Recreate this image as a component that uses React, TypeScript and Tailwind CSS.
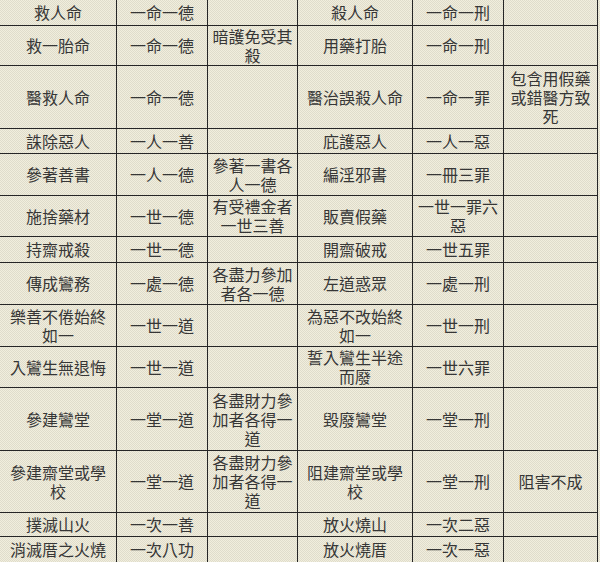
import React from "react";

type Row = { h: string; cells: string[] };

// rows of the merit / demerit table
const rows: Row[] = [
  { h: "h-[26px]", cells: ["救人命", "一命一德", "", "殺人命", "一命一刑", ""] },
  { h: "h-[40px]", cells: ["救一胎命", "一命一德", "暗護免受其殺", "用藥打胎", "一命一刑", ""] },
  { h: "h-[63px]", cells: ["醫救人命", "一命一德", "", "醫治誤殺人命", "一命一罪", "包含用假藥或錯醫方致死"] },
  { h: "h-[25px]", cells: ["誅除惡人", "一人一善", "", "庇護惡人", "一人一惡", ""] },
  { h: "h-[42px]", cells: ["參著善書", "一人一德", "參著一書各人一德", "編淫邪書", "一冊三罪", ""] },
  { h: "h-[41px]", cells: ["施捨藥材", "一世一德", "有受禮金者一世三善", "販賣假藥", "一世一罪六惡", ""] },
  { h: "h-[26px]", cells: ["持齋戒殺", "一世一德", "", "開齋破戒", "一世五罪", ""] },
  { h: "h-[42px]", cells: ["傳成鸞務", "一處一德", "各盡力參加者各一德", "左道惑眾", "一處一刑", ""] },
  { h: "h-[42px]", cells: ["樂善不倦始終如一", "一世一道", "", "為惡不改始終如一", "一世一刑", ""] },
  { h: "h-[41px]", cells: ["入鸞生無退悔", "一世一道", "", "誓入鸞生半途而廢", "一世六罪", ""] },
  { h: "h-[63px]", cells: ["參建鸞堂", "一堂一道", "各盡財力參加者各得一道", "毀廢鸞堂", "一堂一刑", ""] },
  { h: "h-[62px]", cells: ["參建齋堂或學校", "一堂一道", "各盡財力參加者各得一道", "阻建齋堂或學校", "一堂一刑", "阻害不成"] },
  { h: "h-[24px]", cells: ["撲滅山火", "一次一善", "", "放火燒山", "一次二惡", ""] },
  { h: "h-[26px]", cells: ["消滅厝之火燒", "一次八功", "", "放火燒厝", "一次一惡", ""] },
];

export default function App() {
  return (
    <div className="w-[600px] h-[562px] overflow-hidden bg-[#e8e5d3] bg-[repeating-conic-gradient(#f1eedd_0_25%,#dfdccb_0_50%)] bg-[length:2px_2px] font-['Noto_Sans_CJK_TC','Noto_Sans_CJK_SC',sans-serif] text-[16px] leading-[19px] text-[#363636]">
      <table className="table-fixed border-separate border-spacing-0 w-[598px]">
        <colgroup>
          <col className="w-[117px]" />
          <col className="w-[91px]" />
          <col className="w-[90px]" />
          <col className="w-[115px]" />
          <col className="w-[91px]" />
          <col className="w-[94px]" />
        </colgroup>
        <tbody>
          {rows.map((row, i) => (
            <tr key={i} className={row.h}>
              {row.cells.map((c, j) => (
                <td
                  key={j}
                  className="border-r border-b border-[#262626] px-[4px] py-0 text-center align-middle break-all"
                >
                  {c}
                </td>
              ))}
            </tr>
          ))}
        </tbody>
      </table>
    </div>
  );
}
